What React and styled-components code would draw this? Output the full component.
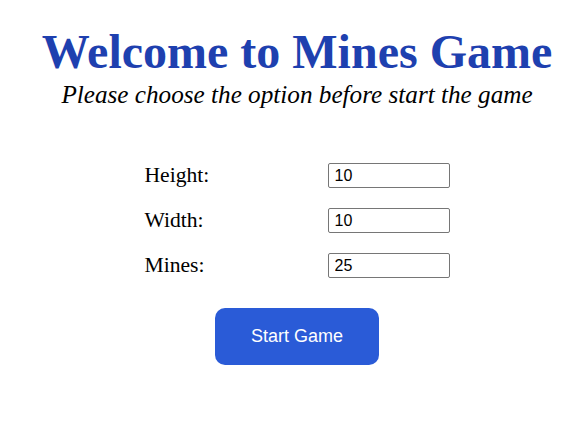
import React, { useState } from 'react';
import styled, { createGlobalStyle } from 'styled-components';

const GlobalStyle = createGlobalStyle`
  body {
    margin: 0;
    background: #ffffff;
    font-family: "Liberation Serif", "Times New Roman", serif;
  }
`;

const App = () => {
  const [height, setHeight] = useState('10');
  const [width, setWidth] = useState('10');
  const [mines, setMines] = useState('25');

  return (
    <Page>
      <GlobalStyle />
      <Title>Welcome to Mines Game</Title>
      <Subtitle>Please choose the option before start the game</Subtitle>
      <Form>
        <Label>Height:</Label>
        <Input value={height} onChange={e => setHeight(e.target.value)} />
        <Label>Width:</Label>
        <Input value={width} onChange={e => setWidth(e.target.value)} />
        <Label>Mines:</Label>
        <Input value={mines} onChange={e => setMines(e.target.value)} />
      </Form>
      <StartButton>Start Game</StartButton>
    </Page>
  );
};

export default App;

const Page = styled.div`
  display: flex;
  flex-direction: column;
  align-items: center;
  padding: 22px 0 0 6px;
`;

const Title = styled.h1`
  margin: 0;
  font-size: 48px;
  font-weight: bold;
  line-height: 60px;
  color: #1e40af;
`;

const Subtitle = styled.p`
  margin: -2px 0 0;
  font-size: 25.2px;
  font-style: italic;
  line-height: 29px;
  color: #000;
`;

const Form = styled.div`
  display: grid;
  grid-template-columns: 183px 122px;
  row-gap: 20px;
  align-items: center;
  margin-top: 54px;
`;

const Label = styled.label`
  font-size: 21.6px;
  color: #000;
`;

const Input = styled.input`
  box-sizing: border-box;
  width: 122px;
  height: 25px;
  margin: 0;
  padding: 0 6px;
  border: 1px solid #767676;
  border-radius: 2px;
  font-family: "Liberation Sans", Arial, sans-serif;
  font-size: 16px;
  color: #000;
`;

const StartButton = styled.button`
  margin-top: 30px;
  width: 164px;
  height: 57px;
  border: none;
  border-radius: 10px;
  background: #2a5bd7;
  color: #ffffff;
  font-family: "Liberation Sans", Arial, sans-serif;
  font-size: 18px;
  cursor: pointer;
`;
